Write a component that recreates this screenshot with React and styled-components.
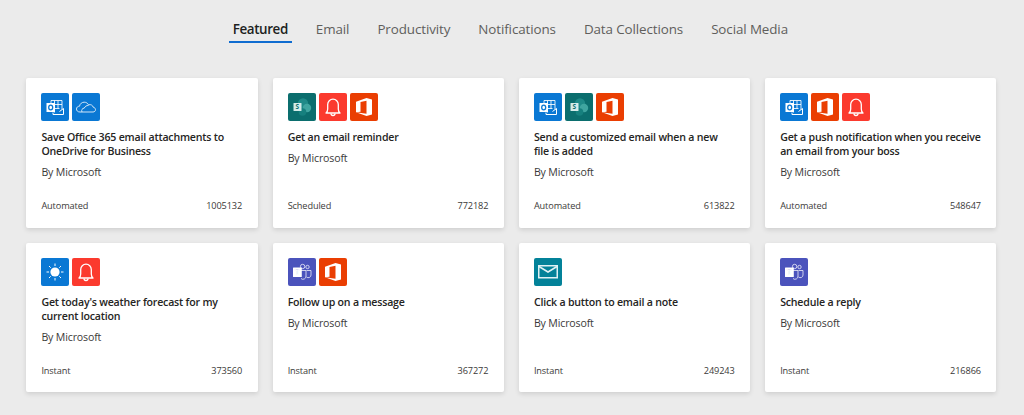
import React from 'react'
import styled, { createGlobalStyle } from 'styled-components';

const GlobalStyle = createGlobalStyle`
html, body {
  margin: 0;
  padding: 0;
  background: #ebebeb;
}
body {
  font-family: "Open Sans", "Noto Sans", "Liberation Sans", sans-serif;
  color: #252423;
}
`;

const PAGE = styled.div`
width: 1024px;
height: 415px;
overflow: hidden;
box-sizing: border-box;
padding: 0 27.6px 0 26.4px;
background: #ebebeb;
`;

const TABS = styled.nav`
display: flex;
justify-content: center;
gap: 20px;
padding: 19px 2px 0 0;
height: 43px;
box-sizing: border-box;
`;

const TAB = styled.a`
display: block;
height: 24px;
line-height: 20px;
padding: 0 4px;
box-sizing: border-box;
font-size: 13.4px;
letter-spacing: ${props => props.$active ? '-0.4px' : '-0.1px'};
white-space: nowrap;
color: ${props => props.$active ? '#201f1e' : '#605e5c'};
font-weight: ${props => props.$active ? 600 : 400};
border-bottom: 2px solid ${props => props.$active ? '#0f6cd0' : 'transparent'};
`;

const GRID = styled.div`
display: grid;
grid-template-columns: repeat(4, 1fr);
grid-auto-rows: 149.5px;
gap: 15px;
margin-top: 35px;
`;

const CARD = styled.div`
display: flex;
flex-direction: column;
box-sizing: border-box;
padding: 15px 15px 15.5px;
background: #fff;
border-radius: 2px;
box-shadow: 0 2px 5px rgba(0,0,0,0.12);
`;

const ICONS = styled.div`
display: flex;
gap: 3px;
height: 28px;
`;

const TILE = styled.div`
width: 28px;
height: 28px;
border-radius: 2px;
display: flex;
align-items: center;
justify-content: center;
background: ${props => props.$bg};
svg {
  display: block;
}
`;

const TITLE = styled.div`
margin-top: 9px;
font-size: 10.6px;
line-height: 14px;
font-weight: 600;
letter-spacing: -0.2px;
color: #252423;
`;

const BY = styled.div`
margin-top: 7px;
font-size: 10.6px;
line-height: 14px;
letter-spacing: -0.15px;
color: #3b3a39;
`;

const FOOTER = styled.div`
margin-top: auto;
margin-right: 0.5px;
display: flex;
justify-content: space-between;
font-size: 9.2px;
line-height: 12px;
letter-spacing: -0.12px;
color: #3b3a39;
`;

const LETTER = styled.text`
font-family: "Open Sans", sans-serif;
font-size: ${props => props.$size};
font-weight: 700;
fill: ${props => props.$fill};
`;

const Outlook = () => (
  <TILE $bg="#0a78d4">
    <svg width="22" height="22" viewBox="0 0 22 22" fill="none" stroke="#fff">
      <path d="M7 4.500h11v9M7 4.500v3M10.500 4.500v12M14 4.500v8M7 8.500h11M10.500 12.500h5" strokeWidth="1" opacity="0.85" />
      <rect x="2.500" y="7" width="8.500" height="9" fill="#fff" stroke="none" />
      <ellipse cx="6.700" cy="11.500" rx="2" ry="2.400" stroke="#0a78d4" strokeWidth="1.300" />
      <path d="M9 16.500v2h10.500v-6l-4 3" strokeWidth="1" />
    </svg>
  </TILE>
);

const OneDrive = () => (
  <TILE $bg="#0a78d4">
    <svg width="22" height="22" viewBox="0 0 22 22" fill="none" stroke="#fff" strokeWidth="0.900" opacity="0.9">
      <path d="M5 16c-2.500 0-3.500-1.500-3.500-3 0-1.700 1.300-2.800 3-2.800.5-2.700 2.600-4 4.700-4 2 0 3.500 1 4.300 2.600 2.500-.7 4.400.7 4.800 2.500 1.500.2 2.200 1.300 2.200 2.400 0 1.300-1 2.300-2.500 2.300z" />
      <path d="M7 16c-1-1.800.3-3.900 2.300-3.900.6-1.600 2.200-2.800 4.200-2.600" />
    </svg>
  </TILE>
);

const Bell = () => (
  <TILE $bg="#fb3a2e">
    <svg width="22" height="22" viewBox="0 0 22 22" fill="none" stroke="#fff" strokeWidth="1.300">
      <path d="M4 17c1.200-1 1.700-2.200 1.700-4V8.500a5.300 5.300 0 0 1 10.600 0V13c0 1.800.5 3 1.700 4z" strokeLinejoin="round" />
      <path d="M9 17.500a2 2 0 0 0 4 0" />
    </svg>
  </TILE>
);

const Office = () => (
  <TILE $bg="#ea3e02">
    <svg width="22" height="22" viewBox="0 0 22 22" fill="#fff">
      <path fillRule="evenodd" d="M3 5.800 13.500 2 19 3.400v15.200L13.500 20 3 16.300zM13.500 4.800 7.500 6.100v9.600l-4.500.6 10.500 1.500z" />
    </svg>
  </TILE>
);

const SharePoint = () => (
  <TILE $bg="#0b6e6e">
    <svg width="24" height="24" viewBox="0 0 24 24">
      <circle cx="13" cy="8.500" r="5.200" fill="#1f8a88" />
      <circle cx="17" cy="13" r="4.200" fill="#3fa5a0" />
      <circle cx="12.500" cy="17" r="3.800" fill="#16807e" />
      <rect x="3.500" y="8" width="8" height="8" rx="0.500" fill="#d4ebe9" />
      <LETTER x="5.500" y="14.400" $size="6.500px" $fill="#0b6e6e">S</LETTER>
    </svg>
  </TILE>
);

const Sun = () => (
  <TILE $bg="#0a78d4">
    <svg width="22" height="22" viewBox="0 0 22 22" fill="#fff" stroke="#fff">
      <circle cx="11" cy="11" r="4.600" stroke="none" />
      <path d="M11 2.500v2.500M11 17v2.500M2.500 11H5M17 11h2.500M5 5l1.700 1.700M15.300 15.300 17 17M5 17l1.700-1.700M15.300 6.700 17 5" strokeWidth="1" />
    </svg>
  </TILE>
);

const Teams = () => (
  <TILE $bg="#4b53bc">
    <svg width="24" height="24" viewBox="0 0 24 24" fill="none" stroke="#fff">
      <circle cx="12.600" cy="6.500" r="2.200" strokeWidth="0.900" opacity="0.8" />
      <circle cx="17.500" cy="7" r="1.700" strokeWidth="0.900" opacity="0.8" />
      <path d="M11 10.500h5v5.500a3 3 0 0 1-5 2.500M16.500 10.500h4.500v4.500a2.700 2.700 0 0 1-4.500 2" strokeWidth="0.900" opacity="0.8" />
      <rect x="3" y="7.500" width="8.800" height="9.500" rx="0.500" fill="#fff" stroke="none" />
      <LETTER x="4.800" y="15.200" $size="8px" $fill="#4b53bc">T</LETTER>
    </svg>
  </TILE>
);

const Mail = () => (
  <TILE $bg="#038299">
    <svg width="24" height="24" viewBox="0 0 24 24" fill="none" stroke="#dff1f4" strokeWidth="1.500">
      <rect x="2.750" y="5.750" width="18.500" height="12" />
      <path d="M3 6.500 12 12l9-5.500" />
    </svg>
  </TILE>
);

const tabs = ['Featured', 'Email', 'Productivity', 'Notifications', 'Data Collections', 'Social Media'];

const flows = [
  { icons: [Outlook, OneDrive], title: 'Save Office 365 email attachments to OneDrive for Business', type: 'Automated', count: 1005132 },
  { icons: [SharePoint, Bell, Office], title: 'Get an email reminder', type: 'Scheduled', count: 772182 },
  { icons: [Outlook, SharePoint, Office], title: 'Send a customized email when a new file is added', type: 'Automated', count: 613822 },
  { icons: [Outlook, Office, Bell], title: 'Get a push notification when you receive an email from your boss', type: 'Automated', count: 548647 },
  { icons: [Sun, Bell], title: "Get today's weather forecast for my current location", type: 'Instant', count: 373560 },
  { icons: [Teams, Office], title: 'Follow up on a message', type: 'Instant', count: 367272 },
  { icons: [Mail], title: 'Click a button to email a note', type: 'Instant', count: 249243 },
  { icons: [Teams], title: 'Schedule a reply', type: 'Instant', count: 216866 },
];

const App = () => {
  return (
    <PAGE>
      <GlobalStyle />
      <TABS>
        {tabs.map((tab, index) => (
          <TAB key={tab} $active={index === 0}>{tab}</TAB>
        ))}
      </TABS>
      <GRID>
        {flows.map((flow) => (
          <CARD key={flow.title}>
            <ICONS>
              {flow.icons.map((Icon, index) => <Icon key={index} />)}
            </ICONS>
            <TITLE>{flow.title}</TITLE>
            <BY>By Microsoft</BY>
            <FOOTER>
              <span>{flow.type}</span>
              <span>{flow.count}</span>
            </FOOTER>
          </CARD>
        ))}
      </GRID>
    </PAGE>
  )
}

export default App
